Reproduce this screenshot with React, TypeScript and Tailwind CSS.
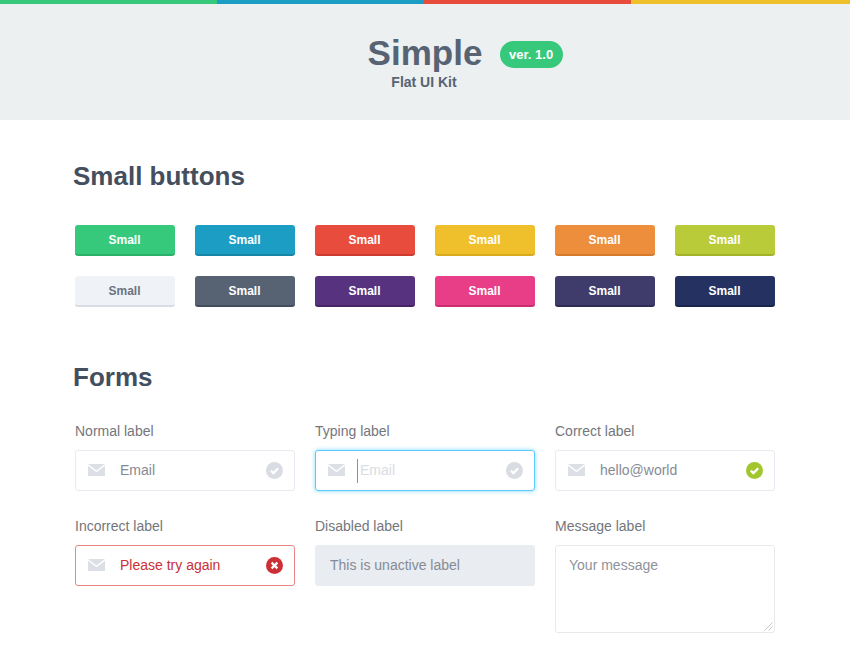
import type { ReactNode } from "react";

const smallButtons = [
  "bg-[#36c97b] border-[#2bb069] text-white",
  "bg-[#1c9ec4] border-[#1686a8] text-white",
  "bg-[#e84c3d] border-[#cc3b2e] text-white",
  "bg-[#f0c02c] border-[#d8aa1e] text-white",
  "bg-[#ec8e3b] border-[#d47a2a] text-white",
  "bg-[#b9cb38] border-[#a2b32a] text-white",
  "bg-[#eff2f6] border-[#d8dde5] text-[#6b7482]",
  "bg-[#576373] border-[#434e5c] text-white",
  "bg-[#57337f] border-[#452568] text-white",
  "bg-[#e83e87] border-[#cc2d72] text-white",
  "bg-[#3f3b6b] border-[#2e2b54] text-white",
  "bg-[#253261] border-[#19244b] text-white",
];

function MailIcon() {
  return (
    <svg width="17" height="12" viewBox="0 0 17 12" className="shrink-0 mb-px">
      <path d="M0 0h17L8.5 6.4z" fill="#dcdfe5" />
      <path d="M0 1.8V12h17V1.8L8.5 8.2z" fill="#dcdfe5" />
    </svg>
  );
}

function CheckIcon({ color }: { color: string }) {
  return (
    <svg width="17" height="17" viewBox="0 0 17 17" className="shrink-0">
      <circle cx="8.5" cy="8.5" r="8.5" fill={color} />
      <path d="M4.8 8.6l2.6 2.5 4.8-4.8" fill="none" stroke="#fff" strokeWidth="2.2" />
    </svg>
  );
}

function CrossIcon() {
  return (
    <svg width="17" height="17" viewBox="0 0 17 17" className="shrink-0">
      <circle cx="8.5" cy="8.5" r="8.5" fill="#cc2f36" />
      <path d="M5.6 5.6l5.8 5.8M11.4 5.6l-5.8 5.8" fill="none" stroke="#fff" strokeWidth="2.2" />
    </svg>
  );
}

function Field({ label, children }: { label: string; children: ReactNode }) {
  return (
    <div className="flex flex-col">
      <span className="text-[14px] leading-[16px] text-[#74767c] mb-[11px]">{label}</span>
      {children}
    </div>
  );
}

export default function App() {
  return (
    <div className="w-[850px] h-[650px] overflow-hidden bg-white font-['Liberation_Sans',Arial,sans-serif]">
      <div className="flex h-1">
        <div className="w-[217px] bg-[#36c97b]" />
        <div className="w-[206px] bg-[#1c9ec4]" />
        <div className="w-[208px] bg-[#e84c3d]" />
        <div className="flex-1 bg-[#f0c02c]" />
      </div>
      <header className="h-[116px] bg-[#ecf0f1] flex flex-col items-center pt-[29px]">
        <h1 className="relative text-[35px] leading-[40px] font-bold text-[#576373]">
          Simple
          <span className="absolute left-[132px] top-[8px] h-[27px] w-[63px] rounded-full bg-[#36c97b] text-white text-[13px] leading-[27px] font-bold text-center">
            ver. 1.0
          </span>
        </h1>
        <p className="text-[14px] leading-[16px] font-bold text-[#576373] mt-[1px] pr-[2px]">Flat UI Kit</p>
      </header>

      <main className="px-[75px]">
        <h2 className="text-[26px] leading-[30px] font-bold text-[#434e5e] ml-[-2px] mt-[41px]">Small buttons</h2>
        <div className="grid grid-cols-6 gap-x-5 gap-y-5 mt-[34px]">
          {smallButtons.map((cls, i) => (
            <div
              key={i}
              className={`h-[31px] rounded-[3px] border-b-2 pr-px text-[12px] font-bold flex items-center justify-center ${cls}`}
            >
              Small
            </div>
          ))}
        </div>

        <h2 className="text-[26px] leading-[30px] font-bold text-[#434e5e] ml-[-2px] mt-[55px]">Forms</h2>
        <div className="grid grid-cols-3 gap-x-5 gap-y-[27px] mt-[31px] items-start">
          <Field label="Normal label">
            <div className="h-[41px] rounded-[3px] border border-[#e8ebf1] flex items-center pl-[12px] pr-[11px]">
              <MailIcon />
              <span className="ml-[15px] text-[14px] text-[#858b94]">Email</span>
              <span className="ml-auto"><CheckIcon color="#d9dce2" /></span>
            </div>
          </Field>
          <Field label="Typing label">
            <div className="h-[41px] rounded-[3px] border border-[#5cc8fb] shadow-[0_0_4px_#7fd8fd] flex items-center pl-[12px] pr-[11px]">
              <MailIcon />
              <span className="ml-[12px] w-px h-[24px] bg-[#8b9097]" />
              <span className="ml-[2px] text-[14px] text-[#d9dce2]">Email</span>
              <span className="ml-auto"><CheckIcon color="#d9dce2" /></span>
            </div>
          </Field>
          <Field label="Correct label">
            <div className="h-[41px] rounded-[3px] border border-[#e8ebf1] flex items-center pl-[12px] pr-[11px]">
              <MailIcon />
              <span className="ml-[15px] text-[14px] text-[#858b94]">hello@world</span>
              <span className="ml-auto"><CheckIcon color="#a3c62f" /></span>
            </div>
          </Field>
          <Field label="Incorrect label">
            <div className="h-[41px] rounded-[3px] border border-[#ea8585] flex items-center pl-[12px] pr-[11px]">
              <MailIcon />
              <span className="ml-[15px] text-[14px] text-[#cc2f36]">Please try again</span>
              <span className="ml-auto"><CrossIcon /></span>
            </div>
          </Field>
          <Field label="Disabled label">
            <div className="h-[41px] rounded-[3px] bg-[#e9ecf1] flex items-center pl-[15px]">
              <span className="text-[14px] text-[#858b94]">This is unactive label</span>
            </div>
          </Field>
          <Field label="Message label">
            <div className="relative h-[88px]">
              <textarea
                readOnly
                placeholder="Your message"
                className="block h-full w-full rounded-[3px] border border-[#e8e9ec] px-[13px] py-[10px] text-[14px] leading-[18px] placeholder:text-[#8e939b] outline-none resize-none"
              />
              <svg width="9" height="9" viewBox="0 0 9 9" className="absolute right-[2px] bottom-[2px]">
                <path d="M0.5 8.5L8.5 0.5M4.5 8.5L8.5 4.5" stroke="#c4c6ca" strokeWidth="1" fill="none" />
              </svg>
            </div>
          </Field>
        </div>
      </main>
    </div>
  );
}
